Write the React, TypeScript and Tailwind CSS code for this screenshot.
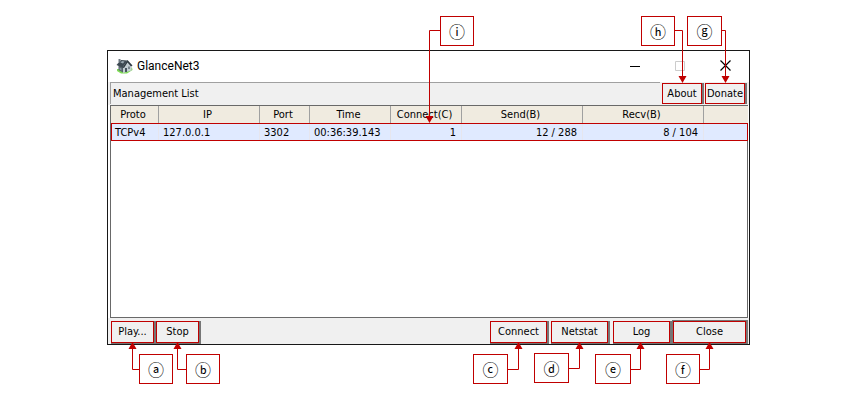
import type { ReactNode } from "react";

const uiFont = "font-['DejaVu_Sans_Condensed','DejaVu_Sans',sans-serif]";

type CalloutProps = {
  letter: string;
  place: string;
  line: string;
  head: string;
};

/* A lettered box; its connector is drawn from the box's own top left corner. */
function Callout({ letter, place, line, head }: CalloutProps) {
  return (
    <div
      className={`absolute z-10 flex h-[30px] items-center justify-center border border-[#c00000] bg-white font-['Noto_Sans_CJK_KR',sans-serif] text-base leading-4 ${place}`}
    >
      <svg className="pointer-events-none absolute -left-px -top-px h-px w-px overflow-visible" aria-hidden="true">
        <path d={line} fill="none" stroke="#c00000" />
        <path d={head} fill="#c00000" />
      </svg>
      {letter}
    </div>
  );
}

function PushButton({ children, className }: { children: ReactNode; className: string }) {
  return (
    <span className={`flex border-[#767676] ${className}`}>
      <button type="button" className="w-full border border-[#c00000] bg-[#f0f0f0] text-center leading-4">
        {children}
      </button>
    </span>
  );
}

function HouseIcon() {
  return (
    <svg width="17" height="16" viewBox="0 0 17 16" aria-hidden="true">
      <path d="M1 11 8 11 16 9.500 16.500 12 11 15.500H5L1 13Z" fill="#7edb55" />
      <path d="M2.500 7 7 9V14.500L2.500 12Z" fill="#55626b" />
      <path d="m7 9 4.500-5 4 4v4.500L7 15Z" fill="#c3cdd4" />
      <path d="M.5 7 5 2l6.500.5L6.500 9.500Z" fill="#3d4953" />
      <path d="M6.500 9.500 11.500 2 16.500 7.500 15 8.500 11.500 4.500 8 10Z" fill="#2f3a43" />
      <path d="M2.500 1h2v3.500h-2Z" fill="#6b7780" />
      <path d="M9 10h2v4H9Z" fill="#46535d" />
      <path d="M12 8.500h2V11h-2Z" fill="#7b8790" />
      <path d="m4.500 4.500 1.500-1.500 2.500.5L7 5.500Z" fill="#9aa8b2" />
      <path d="M3.500 9.500 5.500 10.500V12.500L3.500 11.500Z" fill="#8d9aa4" />
    </svg>
  );
}

const columns = [
  { title: "Proto", value: "TCPv4", width: "w-12", align: "text-left" },
  { title: "IP", value: "127.0.0.1", width: "w-[101px]", align: "text-left" },
  { title: "Port", value: "3302", width: "w-[50px]", align: "text-left" },
  { title: "Time", value: "00:36:39.143", width: "w-[81px]", align: "text-left" },
  { title: "Connect(C)", value: "1", width: "w-[71px]", align: "text-right" },
  { title: "Send(B)", value: "12 / 288", width: "w-[121px]", align: "text-right" },
  { title: "Recv(B)", value: "8 / 104", width: "w-[121px]", align: "text-right" },
];

export default function App() {
  return (
    <main className={`bg-white text-black ${uiFont}`}>
      <div className="relative ml-[107px] mr-[110px] pb-[39px] pt-[50px]">
        <section className="border border-[#181818] bg-white text-[11px]" aria-label="GlanceNet3">
          <header className="flex h-[31px] items-center pb-0.5 pl-2">
            <HouseIcon />
            <h1 className="ml-1 grow font-[Roboto,sans-serif] text-xs leading-4">GlanceNet3</h1>
            <button type="button" aria-label="Minimize" className="flex w-[45px] justify-center">
              <svg width="10" height="10"><path d="M0 5.5h10" stroke="#000" /></svg>
            </button>
            <button type="button" aria-label="Maximize" disabled className="flex w-[45px] justify-center">
              <svg width="10" height="10"><path d="M.5.5h9v9h-9Z" fill="none" stroke="#ccc" /></svg>
            </button>
            <button type="button" aria-label="Close window" className="flex w-[47px] justify-center">
              <svg width="11" height="11"><path d="m.5.5 10 10m0-10-10 10" stroke="#000" strokeWidth="1.2" /></svg>
            </button>
          </header>

          <div className="flex h-[23px] border-x-2 border-[#f0f0f0] bg-[#f0f0f0] pb-px">
            <div className="grow border-l border-t border-[#a0a0a0] pl-0.5 pt-[3px] leading-4">
              Management List
            </div>
            <div className="flex gap-px pl-0.5 pt-px">
              <PushButton className="w-[42px] border-r-2">About</PushButton>
              <PushButton className="w-[42px] border-r-2">Donate</PushButton>
            </div>
          </div>

          <div className="ml-0.5 mr-px min-h-[213px] border border-[#696969] bg-white">
            <table className="w-[calc(100%+1px)] table-fixed border-collapse">
              <thead className="bg-[#f0ebe0]">
                <tr>
                  {columns.map((c) => (
                    <th key={c.title} className={`h-[17px] p-0 font-normal leading-4 ${c.width}`}>
                      <div className="border-r border-[#a0a0a0] pr-[3px] pt-px">{c.title}</div>
                    </th>
                  ))}
                  <th className="p-0" aria-label="Spare" />
                </tr>
              </thead>
              <tbody>
                <tr className="bg-[#e0eaff] outline-1 -outline-offset-1 outline-[#c00000]">
                  {columns.map((c) => (
                    <td key={c.title} className={`h-[18px] whitespace-nowrap p-0 leading-4 ${c.align}`}>
                      <div className="border-r border-[#e6e6ee] pl-1 pr-[5px] pt-0.5">{c.value}</div>
                    </td>
                  ))}
                  <td className="p-0" />
                </tr>
              </tbody>
            </table>
          </div>

          <footer className="flex h-[26px] bg-[#f0f0f0] pl-[3px] pr-px pt-[3px]">
            <PushButton className="w-[45px] border-b border-r-2">Play...</PushButton>
            <PushButton className="w-[45px] border-b border-r-2">Stop</PushButton>
            <div className="ml-auto flex">
              <PushButton className="mr-0.5 w-[59px] border-b border-r-2">Connect</PushButton>
              <PushButton className="mr-[3px] w-[59px] border-b border-r-2">Netstat</PushButton>
              <PushButton className="w-[59px] border-b border-r-2">Log</PushButton>
              <PushButton className="-mt-px w-[76px] border-b border-l border-r-2 border-t">Close</PushButton>
            </div>
          </footer>
        </section>

        <Callout letter="ⓘ" place="left-[333px] top-4 w-[34px]" line="M0 14.5H-10.5V101" head="M-14.5 100h8l-4 7Z" />
        <Callout letter="ⓗ" place="right-[75px] top-4 w-[34px]" line="M34 14.5H41.5V61" head="M37.5 60h8l-4 7Z" />
        <Callout letter="ⓖ" place="right-7 top-4 w-[35px]" line="M35 14.5H38.5V61" head="M34.5 60h8l-4 7Z" />
        <Callout letter="ⓐ" place="bottom-0 left-8 w-[34px]" line="M0 15.5H-6.5V-6" head="M-10.5-5h8l-4-7Z" />
        <Callout letter="ⓑ" place="bottom-0 left-[79px] w-[34px]" line="M0 15.5H-8.5V-6" head="M-12.5-5h8l-4-7Z" />
        <Callout letter="ⓒ" place="bottom-0 right-[242px] w-[35px]" line="M35 15.5H45.5V-6" head="M41.5-5h8l-4-7Z" />
        <Callout letter="ⓓ" place="bottom-px right-[181px] w-[35px]" line="M35 15.5H45.5V-6" head="M41.5-4h8l-4-7Z" />
        <Callout letter="ⓔ" place="bottom-0 right-[119px] w-9" line="M36 15.5H45.5V-6" head="M41.5-5h8l-4-7Z" />
        <Callout letter="ⓕ" place="bottom-0 right-[50px] w-[34px]" line="M34 15.5H43.5V-6" head="M39.5-5h8l-4-7Z" />
      </div>
    </main>
  );
}
